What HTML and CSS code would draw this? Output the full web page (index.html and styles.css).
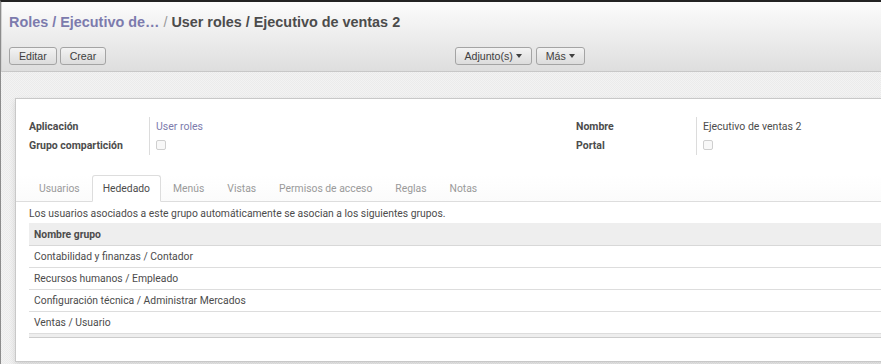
FILE: index.html
```html
<!DOCTYPE html>
<html lang="es">
<head>
    <meta charset="UTF-8">
    <title>User roles / Ejecutivo de ventas 2</title>
    <link rel="stylesheet" href="styles.css">
</head>
<body>
    <div class="page">
        <header class="control-panel">
            <h2 class="breadcrumb">
                <a class="crumb">Roles</a> <span class="sep-link">/</span>
                <a class="crumb">Ejecutivo de…</a> <span class="sep">/</span>
                <span class="active">User roles / Ejecutivo de ventas 2</span>
            </h2>
            <div class="cp-buttons">
                <div class="cp-left">
                    <button class="btn">Editar</button>
                    <button class="btn">Crear</button>
                </div>
                <div class="cp-sidebar">
                    <button class="btn">Adjunto(s) <span class="caret"></span></button>
                    <button class="btn">Más <span class="caret"></span></button>
                </div>
            </div>
        </header>

        <main class="view">
            <div class="sheet">
                <div class="groups">
                    <div class="group">
                        <div class="label">Aplicación</div>
                        <div class="value"><a class="link">User roles</a></div>
                        <div class="label">Grupo compartición</div>
                        <div class="value"><span class="checkbox"></span></div>
                    </div>
                    <div class="group">
                        <div class="label">Nombre</div>
                        <div class="value">Ejecutivo de ventas 2</div>
                        <div class="label">Portal</div>
                        <div class="value"><span class="checkbox"></span></div>
                    </div>
                </div>

                <ul class="tabs">
                    <li class="tab">Usuarios</li>
                    <li class="tab active">Hededado</li>
                    <li class="tab">Menús</li>
                    <li class="tab">Vistas</li>
                    <li class="tab">Permisos de acceso</li>
                    <li class="tab">Reglas</li>
                    <li class="tab">Notas</li>
                </ul>

                <div class="tab-pane">
                    <p class="help">Los usuarios asociados a este grupo automáticamente se asocian a los siguientes grupos.</p>
                    <table class="list">
                        <thead>
                            <tr><th>Nombre grupo</th></tr>
                        </thead>
                        <tbody>
                            <tr><td>Contabilidad y finanzas / Contador</td></tr>
                            <tr><td>Recursos humanos / Empleado</td></tr>
                            <tr><td>Configuración técnica / Administrar Mercados</td></tr>
                            <tr><td>Ventas / Usuario</td></tr>
                        </tbody>
                        <tfoot>
                            <tr><td></td></tr>
                        </tfoot>
                    </table>
                </div>
            </div>
        </main>
    </div>
</body>
</html>
```

FILE: styles.css
```css
body {
    margin: 0;
    height: 364px;
    overflow: hidden;
    background-color: #eeeeee;
    font-family: "Liberation Sans", Arial, sans-serif;
    color: #4c4c4c;
}

.page {
    height: 362px;
    border-top: 2px solid #232323;
    border-left: 1px solid #8c8c8c;
    display: flex;
    flex-direction: column;
}

/* control panel */

.control-panel {
    height: 70px;
    border-bottom: 1px solid #c8c8c8;
    border-left: 1px solid #d4d4d4;
    background: linear-gradient(to bottom, #fcfcfc, #dedede);
    box-sizing: border-box;
    padding-top: 10px;
}

.breadcrumb {
    margin: 0 0 0 7px;
    font-size: 14.4px;
    font-weight: bold;
    line-height: 20px;
    white-space: nowrap;
}

.crumb, .sep-link {
    color: #7c7bad;
}

.sep {
    color: #9a9a9a;
    font-weight: normal;
}

.active {
    color: #4c4c4c;
}

.cp-buttons {
    display: grid;
    grid-template-columns: 1fr 1fr;
    padding: 15px 7px 0;
}

.cp-left, .cp-sidebar {
    display: flex;
    gap: 3px;
}

.cp-sidebar {
    padding-left: 13px;
    gap: 4px;
}

.btn {
    height: 18px;
    padding: 0 9px;
    border: 1px solid #a4a4a4;
    border-radius: 3px;
    background: linear-gradient(to bottom, #f3f3f3, #dcdcdc);
    font-family: "Liberation Sans", Arial, sans-serif;
    font-size: 10.6px;
    color: #404040;
    line-height: 16px;
}

.caret {
    display: inline-block;
    width: 0;
    height: 0;
    vertical-align: 2px;
    border-top: 4px solid #404040;
    border-left: 3.5px solid transparent;
    border-right: 3.5px solid transparent;
}

/* form view */

.view {
    flex: 1;
    overflow: hidden;
    background-color: #efefef;
    background-image: repeating-conic-gradient(#ebebeb 0 25%, #f3f3f3 0 50%);
    background-size: 2px 2px;
    padding: 26px 0 0 14px;
}

.sheet {
    width: 1094px;
    height: 244px;
    padding: 18px 13px 0;
    background: #fff;
    border: 1px solid #c8c8c8;
    box-shadow: 0 3px 6px rgba(0, 0, 0, 0.12);
    font-family: Roboto, "Liberation Sans", sans-serif;
    font-size: 10.35px;
}

.groups {
    display: grid;
    grid-template-columns: 1fr 1fr;
    font-size: 10.5px;
}

.group {
    display: grid;
    grid-template-columns: 120px 1fr;
    grid-auto-rows: 19px;
    align-items: center;
}

.label {
    font-weight: bold;
    color: #4c4c4c;
    height: 19px;
    line-height: 19px;
}

.value {
    height: 19px;
    line-height: 19px;
    padding-left: 6px;
    border-left: 1px solid #dcdcdc;
    color: #4c4c4c;
}

.link {
    color: #7c7bad;
}

.checkbox {
    display: inline-block;
    width: 8px;
    height: 8px;
    border: 1px solid #cfcfcf;
    border-radius: 2px;
    background: #f8f8f8;
    vertical-align: -1px;
}

/* notebook */

.tabs {
    list-style: none;
    display: flex;
    margin: 20px -13px 0;
    padding: 0 0 0 12px;
    border-bottom: 1px solid #dddddd;
    background: linear-gradient(to bottom, #ffffff, #fbfbfb);
}

.tab {
    height: 25px;
    line-height: 25px;
    padding: 0 10px;
    margin: 0 1px -1px 0;
    border: 1px solid transparent;
    border-radius: 3px 3px 0 0;
    color: #9a9a9a;
}

.tab.active {
    color: #4c4c4c;
    background: #fff;
    border-color: #dddddd #dddddd #fff;
}

.help {
    margin: 0;
    line-height: 19px;
    padding-top: 2px;
    color: #4c4c4c;
}

.list {
    width: 100%;
    border-collapse: collapse;
}

.list th {
    height: 22px;
    padding: 0 5px;
    text-align: left;
    background: #eeeeee;
    border-bottom: 1px solid #d8d8d8;
    font-weight: bold;
}

.list td {
    height: 21px;
    padding: 0 5px;
    border-bottom: 1px solid #dddddd;
}

.list tfoot td {
    height: 3px;
    padding: 0;
    background: #eeeeee;
    border-top: 1px solid #cccccc;
    border-bottom: 1px solid #cccccc;
}
```
